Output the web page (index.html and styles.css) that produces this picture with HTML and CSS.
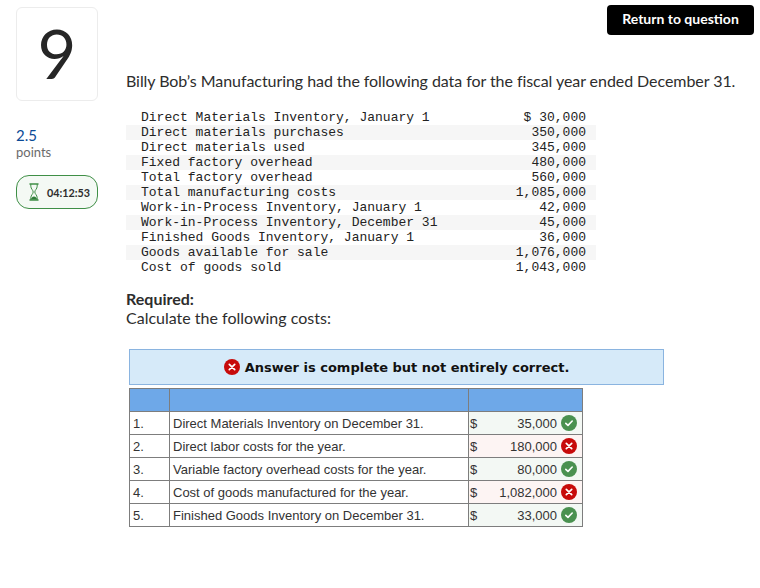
FILE: index.html
```html
<!DOCTYPE html>
<html lang="en">
<head>
  <meta charset="UTF-8">
  <title>Question 9</title>
  <link rel="stylesheet" href="styles.css">
</head>
<body>
  <div class="page">
    <aside class="sidebar">
      <div class="question-number">9</div>
      <div class="points-value">2.5</div>
      <div class="points-label">points</div>
      <div class="timer">
        <svg class="timer-icon" width="12" height="18" viewBox="0 0 12 18">
          <path d="M2 1h8M2 17h8" fill="none" stroke="#3f8f46" stroke-width="1.500" stroke-linecap="round"/>
          <path d="M2.800 1v2.200c0 2.800 2.400 3.800 2.400 5.800s-2.400 3-2.400 5.800V17M9.200 1v2.200c0 2.800-2.400 3.800-2.400 5.800s2.400 3 2.400 5.800V17" fill="none" stroke="#3f8f46" stroke-width="1"/>
          <path d="M3 16.500c0-1.800 1.500-2.800 3-3 1.500 .2 3 1.200 3 3z" fill="#2f7d38"/>
        </svg>
        <span>04:12:53</span>
      </div>
    </aside>

    <main class="content">
      <div class="top-bar">
        <a class="return-btn">Return to question</a>
      </div>

      <p class="intro">Billy Bob’s Manufacturing had the following data for the fiscal year ended December 31.</p>

      <table class="data-table">
        <tr><td>Direct Materials Inventory, January 1</td><td class="num">$ 30,000</td></tr>
        <tr><td>Direct materials purchases</td><td class="num">350,000</td></tr>
        <tr><td>Direct materials used</td><td class="num">345,000</td></tr>
        <tr><td>Fixed factory overhead</td><td class="num">480,000</td></tr>
        <tr><td>Total factory overhead</td><td class="num">560,000</td></tr>
        <tr><td>Total manufacturing costs</td><td class="num">1,085,000</td></tr>
        <tr><td>Work-in-Process Inventory, January 1</td><td class="num">42,000</td></tr>
        <tr><td>Work-in-Process Inventory, December 31</td><td class="num">45,000</td></tr>
        <tr><td>Finished Goods Inventory, January 1</td><td class="num">36,000</td></tr>
        <tr><td>Goods available for sale</td><td class="num">1,076,000</td></tr>
        <tr><td>Cost of goods sold</td><td class="num">1,043,000</td></tr>
      </table>

      <div class="required">
        <strong>Required:</strong><br>
        Calculate the following costs:
      </div>

      <div class="answer-wrap">
        <div class="banner">
          <svg class="mark" width="16" height="16" viewBox="0 0 16 16"><circle cx="8" cy="8" r="8" fill="#c70a0a"/><path d="M5.300 5.300l5.400 5.400M10.700 5.300l-5.400 5.400" stroke="#fff" stroke-width="1.700" stroke-linecap="round"/></svg>
          <span>Answer is complete but not entirely correct.</span>
        </div>

        <table class="answer-table">
          <tr class="head"><th class="col-no"></th><th class="col-text"></th><th class="col-val"></th></tr>
          <tr>
            <td>1.</td><td>Direct Materials Inventory on December 31.</td>
            <td class="val good"><div class="val-inner"><span>$</span><span class="amount">35,000</span>
              <svg class="mark" width="16" height="16" viewBox="0 0 16 16"><circle cx="8" cy="8" r="8" fill="#4a9150"/><path d="M4.800 8.300l2.200 2.100 4.200-4.400" fill="none" stroke="#fff" stroke-width="1.600" stroke-linecap="round" stroke-linejoin="round"/></svg>
            </div></td>
          </tr>
          <tr>
            <td>2.</td><td>Direct labor costs for the year.</td>
            <td class="val bad"><div class="val-inner"><span>$</span><span class="amount">180,000</span>
              <svg class="mark" width="16" height="16" viewBox="0 0 16 16"><circle cx="8" cy="8" r="8" fill="#c70a0a"/><path d="M5.300 5.300l5.400 5.400M10.700 5.300l-5.400 5.400" stroke="#fff" stroke-width="1.700" stroke-linecap="round"/></svg>
            </div></td>
          </tr>
          <tr>
            <td>3.</td><td>Variable factory overhead costs for the year.</td>
            <td class="val good"><div class="val-inner"><span>$</span><span class="amount">80,000</span>
              <svg class="mark" width="16" height="16" viewBox="0 0 16 16"><circle cx="8" cy="8" r="8" fill="#4a9150"/><path d="M4.800 8.300l2.200 2.100 4.200-4.400" fill="none" stroke="#fff" stroke-width="1.600" stroke-linecap="round" stroke-linejoin="round"/></svg>
            </div></td>
          </tr>
          <tr>
            <td>4.</td><td>Cost of goods manufactured for the year.</td>
            <td class="val bad"><div class="val-inner"><span>$</span><span class="amount">1,082,000</span>
              <svg class="mark" width="16" height="16" viewBox="0 0 16 16"><circle cx="8" cy="8" r="8" fill="#c70a0a"/><path d="M5.300 5.300l5.400 5.400M10.700 5.300l-5.400 5.400" stroke="#fff" stroke-width="1.700" stroke-linecap="round"/></svg>
            </div></td>
          </tr>
          <tr>
            <td>5.</td><td>Finished Goods Inventory on December 31.</td>
            <td class="val good"><div class="val-inner"><span>$</span><span class="amount">33,000</span>
              <svg class="mark" width="16" height="16" viewBox="0 0 16 16"><circle cx="8" cy="8" r="8" fill="#4a9150"/><path d="M4.800 8.300l2.200 2.100 4.200-4.400" fill="none" stroke="#fff" stroke-width="1.600" stroke-linecap="round" stroke-linejoin="round"/></svg>
            </div></td>
          </tr>
        </table>
      </div>
    </main>
  </div>
</body>
</html>
```

FILE: styles.css
```css
body {
  margin: 0;
  font-family: Lato, "Open Sans", sans-serif;
  color: #2d2d2d;
  background: #fff;
}
.page {
  display: flex;
  padding: 5px 6px 0 16px;
}
.sidebar {
  width: 82px;
  margin-right: 28px;
  padding-top: 2px;
  flex-shrink: 0;
}
.question-number {
  box-sizing: border-box;
  height: 94px;
  border: 1px solid #ececec;
  border-radius: 6px;
  text-align: center;
  font-size: 67px;
  line-height: 90px;
  color: #262626;
}
.points-value {
  margin-top: 25px;
  font-size: 15px;
  line-height: 18px;
  color: #0b4a96;
}
.points-label {
  font-size: 13px;
  line-height: 16px;
  color: #6b6b6b;
}
.timer {
  box-sizing: border-box;
  height: 34px;
  margin-top: 15px;
  border: 1px solid #3f8f46;
  border-radius: 13px;
  background: #f4f9f4;
  display: flex;
  align-items: center;
  padding-left: 11px;
  gap: 7px;
  font-size: 10.800px;
  font-weight: 700;
  color: #2d2d2d;
}
.content {
  flex: 1;
}
.top-bar {
  display: flex;
  justify-content: flex-end;
}
.return-btn {
  box-sizing: border-box;
  width: 147px;
  height: 30px;
  background: #000;
  color: #fff;
  border-radius: 4px;
  font-size: 14px;
  font-weight: 700;
  line-height: 28px;
  text-align: center;
}
.intro {
  margin: 0;
  padding-top: 36px;
  font-size: 16px;
  line-height: 20px;
  letter-spacing: -0.06px;
}
.data-table {
  width: 470px;
  margin-top: 19px;
  border-collapse: collapse;
  font-family: "Liberation Mono", monospace;
  font-size: 13px;
}
.data-table td {
  height: 15px;
  padding: 0 0 0 15px;
  line-height: 15px;
  color: #222;
}
.data-table .num {
  text-align: right;
  padding: 0 10px 0 0;
}
.data-table tr:nth-child(even) {
  background: #f6f6f6;
}
.required {
  margin-top: 14px;
  font-size: 16px;
  line-height: 19px;
}
.answer-wrap {
  margin: 22px 0 0 3px;
}
.banner {
  box-sizing: border-box;
  width: 535px;
  height: 36px;
  background: #d6eaf9;
  border: 1px solid #8ab4e0;
  display: flex;
  align-items: center;
  justify-content: center;
  gap: 5px;
  font-family: "DejaVu Sans", sans-serif;
  font-size: 13px;
  font-weight: 700;
  color: #111;
}
.answer-table {
  width: 454px;
  margin-top: 3px;
  border-collapse: collapse;
  table-layout: fixed;
  font-family: "Liberation Sans", Arial, sans-serif;
  font-size: 13px;
  color: #333;
  border: 1px solid #7d7d7d;
}
.answer-table td, .answer-table th {
  border: 1px solid #7d7d7d;
  height: 22px;
  padding: 0 3px;
}
.head {
  background: #6ea8e8;
}
.col-no {
  width: 33px;
}
.col-text {
  width: 292px;
}
.val {
  padding: 0 !important;
}
.val.good {
  background: #f3f8f4;
}
.val.bad {
  background: #fdf4f3;
}
.val-inner {
  display: flex;
  align-items: center;
  padding: 0 5px 0 1px;
}
.amount {
  flex: 1;
  text-align: right;
  margin-right: 4px;
}
.mark {
  flex-shrink: 0;
}
```
